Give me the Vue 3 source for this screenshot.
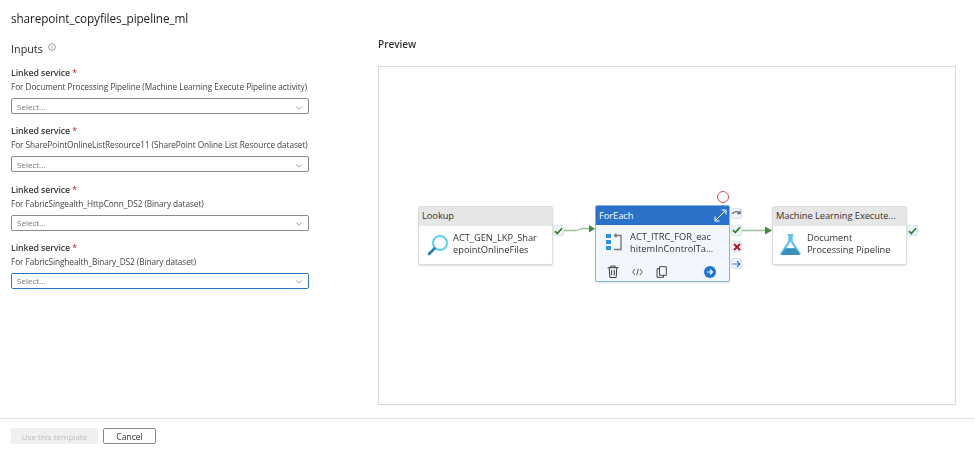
<template>
  <div class="page">
    <h1 class="title">sharepoint_copyfiles_pipeline_ml</h1>

    <div class="main">
      <section class="inputs">
        <h2 class="inputs__head">
          Inputs
          <svg class="info" width="8" height="8" viewBox="0 0 8 8">
            <circle cx="4" cy="4" r="3.4" fill="none" stroke="#777" stroke-width="0.7" />
            <path d="M4 3.5v2.2M4 2.2v.7" stroke="#777" stroke-width="0.7" />
          </svg>
        </h2>
        <div v-for="(f, i) in fields" :key="i" class="field">
          <div class="field__label">Linked service <span class="req">*</span></div>
          <div class="field__desc">{{ f.desc }}</div>
          <div class="select" :class="{ 'select--focus': f.focus }">
            <span>Select...</span>
            <svg width="6" height="4" viewBox="0 0 6 4">
              <path d="M.4.6 3 3.200 5.600.6" fill="none" stroke="#888" stroke-width="0.8" />
            </svg>
          </div>
        </div>
      </section>

      <section class="preview">
        <h2 class="preview__head">Preview</h2>
        <div class="canvas">
          <svg class="edges" width="578" height="339" viewBox="0 0 578 339">
            <path d="M185 164.500H198C202 164.500 201 162.500 205 162.500H212" fill="none" stroke="#9dc29d" stroke-width="1.500" />
            <path d="M211 159v7.500l6-3.750z" fill="#3f8a3f" />
            <path d="M362 164.500H389" fill="none" stroke="#9dc29d" stroke-width="1.500" />
            <path d="M387 160.500v8l7-4z" fill="#3f8a3f" />
          </svg>

          <div class="node node--lookup">
            <div class="node__head">Lookup</div>
            <div class="node__body">
              <svg class="node__icon" width="22" height="22" viewBox="0 0 22 22">
                <circle cx="13" cy="9" r="7" fill="#fff" stroke="#5ed0f2" stroke-width="2" />
                <path d="M7.500 14.500 2 20" stroke="#2a7cb0" stroke-width="2.600" stroke-linecap="round" />
              </svg>
              <div class="node__text">ACT_GEN_LKP_Shar<br />epointOnlineFiles</div>
            </div>
          </div>
          <span class="badge badge--lookup">
            <svg width="9" height="8" viewBox="0 0 9 8"><path d="M1 4.200 3.300 6.500 8 1.300" fill="none" stroke="#2f7d1e" stroke-width="1.700" /></svg>
          </span>

          <div class="node node--foreach">
            <div class="node__head">
              ForEach
              <svg class="expand" width="13" height="13" viewBox="0 0 13 13">
                <path d="M1 12 12 1M7.500 1H12V5.500M1 7.500V12H5.500" fill="none" stroke="#fff" stroke-width="1" />
              </svg>
            </div>
            <div class="node__body">
              <svg class="node__icon" width="16" height="18" viewBox="0 0 16 18">
                <rect x="0" y="1" width="5" height="4" fill="#2f8fe0" />
                <rect x="0" y="7" width="5" height="4" fill="#2f8fe0" />
                <rect x="0" y="13" width="5" height="4" fill="#2f8fe0" />
                <path d="M9 2.500h6v14H8M10.500 .8 8.500 2.500l2 1.700" fill="none" stroke="#777" stroke-width="1.400" />
              </svg>
              <div class="node__text">ACT_ITRC_FOR_eac<br />hitemInControlTa...</div>
            </div>
            <div class="node__tools">
              <svg width="12" height="13" viewBox="0 0 11 12">
                <path d="M.5 2.500h10M3.500 2.500V1h4v1.500M2 2.500l.6 9h5.800l.6-9M4.300 4.500v5M6.700 4.500v5" fill="none" stroke="#333" stroke-width="0.900" />
              </svg>
              <svg width="11" height="8" viewBox="0 0 11 8">
                <path d="M3 1 .7 4 3 7M8 1l2.300 3L8 7M6.300 .8 4.700 7.200" fill="none" stroke="#333" stroke-width="0.800" />
              </svg>
              <svg width="11" height="12" viewBox="0 0 11 12">
                <path d="M3.500 .7h6.800v8.600H3.500zM3.500 2.700H1v8.600h6.500V9.300" fill="none" stroke="#333" stroke-width="0.900" />
              </svg>
              <span class="tools__go">
                <svg width="8" height="8" viewBox="0 0 8 8"><path d="M1 4h5.500M4 1.500 6.500 4 4 6.500" fill="none" stroke="#fff" stroke-width="1.100" /></svg>
              </span>
            </div>
          </div>
          <span class="ring"></span>
          <div class="ports">
            <span class="badge">
              <svg width="9" height="7" viewBox="0 0 9 7"><path d="M.5 4C2.500 1 5.500 1 7.800 3M8 .8V3.500H5.300" fill="none" stroke="#666" stroke-width="1.300" /></svg>
            </span>
            <span class="badge">
              <svg width="9" height="8" viewBox="0 0 9 8"><path d="M1 4.200 3.300 6.500 8 1.300" fill="none" stroke="#2f7d1e" stroke-width="1.700" /></svg>
            </span>
            <span class="badge">
              <svg width="8" height="8" viewBox="0 0 8 8"><path d="M1 1l6 6M7 1 1 7" fill="none" stroke="#b3131b" stroke-width="1.900" /></svg>
            </span>
            <span class="badge">
              <svg width="9" height="8" viewBox="0 0 9 8"><path d="M.5 4h7M5 1.200 7.800 4 5 6.800" fill="none" stroke="#2a75c4" stroke-width="1.200" /></svg>
            </span>
          </div>

          <div class="node node--ml">
            <div class="node__head">Machine Learning Execute...</div>
            <div class="node__body">
              <svg class="node__icon" width="21" height="21" viewBox="0 0 21 21">
                <path d="M7.500 0h6v1.500h-.8v5.500l7.800 12c.6 1-.1 2-1.200 2H1.700C.6 21-.1 20 .5 19l7.800-12V1.500h-.8z" fill="#62c3e8" />
                <path d="M10.500 7.500 14.500 14H6.500z" fill="#fff" />
                <path d="M5 14.500h11l3.500 5.500c.2.500-.1 1-.6 1H2.100c-.5 0-.8-.5-.6-1z" fill="#3a8fbb" />
              </svg>
              <div class="node__text node__text--clip">Document<br />Processing Pipeline</div>
            </div>
          </div>
          <span class="badge badge--ml">
            <svg width="9" height="8" viewBox="0 0 9 8"><path d="M1 4.200 3.300 6.500 8 1.300" fill="none" stroke="#2f7d1e" stroke-width="1.700" /></svg>
          </span>
        </div>
      </section>
    </div>

    <footer class="footer">
      <button class="btn btn--disabled" disabled>Use this template</button>
      <button class="btn">Cancel</button>
    </footer>
  </div>
</template>

<script setup>
const fields = [
  { desc: "For Document Processing Pipeline (Machine Learning Execute Pipeline activity)" },
  { desc: "For SharePointOnlineListResource11 (SharePoint Online List Resource dataset)" },
  { desc: "For FabricSingealth_HttpConn_DS2 (Binary dataset)" },
  { desc: "For FabricSinghealth_Binary_DS2 (Binary dataset)", focus: true },
]
</script>

<style>
body {
  margin: 0;
  background: #fff;
}
</style>

<style scoped>
.page {
  width: 975px;
  height: 453px;
  display: flex;
  flex-direction: column;
  overflow: hidden;
  font-family: "Open Sans", "Noto Sans", sans-serif;
  color: #2b2b2b;
  filter: blur(0.3px);
}

.title {
  margin: 0;
  padding: 10px 0 0 11px;
  font-size: 11.770px;
  line-height: 17px;
  font-weight: 400;
  letter-spacing: -0.1px;
  color: #1f1f1f;
}

.main {
  display: flex;
  flex: 1;
  padding: 0 19px 0 11px;
}

.inputs {
  width: 298px;
  padding-top: 14px;
}

.inputs__head {
  margin: 0 0 11px;
  font-size: 10.800px;
  line-height: 15px;
  font-weight: 400;
  display: flex;
  align-items: flex-start;
  gap: 5px;
}

.info {
  margin-top: 2px;
}

.field {
  height: 58.300px;
}

.field__label {
  font-size: 8.800px;
  line-height: 13px;
  font-weight: 600;
  letter-spacing: -0.1px;
  color: #3a3a3a;
}

.req {
  color: #b3261e;
  font-weight: 400;
}

.field__desc {
  font-size: 8.250px;
  line-height: 13px;
  color: #444;
  letter-spacing: -0.06px;
  margin-bottom: 5px;
  white-space: nowrap;
}

.select {
  height: 16px;
  box-sizing: border-box;
  border: 1px solid #8a8a8a;
  border-radius: 2px;
  display: flex;
  align-items: center;
  justify-content: space-between;
  padding: 0 6px 0 5px;
  font-size: 8px;
  color: #777;
}

.select svg {
  margin-top: 3px;
}

.select--focus {
  border: 1.500px solid #2a7bc8;
}

.preview {
  margin-left: 69px;
  flex: 1;
  padding-top: 10px;
}

.preview__head {
  margin: 0 0 14px;
  font-size: 10px;
  line-height: 15px;
  font-weight: 600;
  color: #333;
}

.canvas {
  position: relative;
  height: 339px;
  box-sizing: border-box;
  border: 1px solid #d9d9d9;
  width: 578px;
}

.edges {
  position: absolute;
  left: -1px;
  top: -1px;
}

.node {
  position: absolute;
  width: 135px;
  box-sizing: border-box;
  background: #fff;
  border: 1px solid #dcdcdc;
  border-radius: 2px;
  box-shadow: 0 1px 2px rgba(0, 0, 0, 0.12);
  overflow: hidden;
}

.node--lookup {
  left: 39px;
  top: 139px;
  height: 59px;
}

.node--ml {
  left: 393px;
  top: 139px;
  height: 59px;
}

.node--foreach {
  left: 216px;
  top: 138px;
  height: 77px;
  background: #f2f7fd;
  border-color: #86b4e4;
}

.node__head {
  height: 19px;
  box-sizing: border-box;
  background: #e6e6e6;
  padding: 0 3px;
  font-size: 9.300px;
  line-height: 18px;
  color: #333;
  white-space: nowrap;
  letter-spacing: -0.05px;
}

.node--foreach .node__head {
  background: #2a72c9;
  color: #fff;
  display: flex;
  justify-content: space-between;
  align-items: center;
  padding-right: 2px;
}

.node__body {
  display: flex;
  align-items: flex-start;
  padding: 6px 0 0 8px;
  height: 32px;
  gap: 4px;
}

.node__text {
  font-size: 9.300px;
  line-height: 12px;
  color: #333;
  white-space: nowrap;
}

.node__text--clip {
  height: 22px;
  overflow: hidden;
}

.node--lookup .node__icon {
  margin-top: 2px;
}

.node--ml .node__body {
  gap: 6px;
  padding-left: 7px;
}

.node--ml .node__icon {
  margin-top: 2px;
}

.node--foreach .node__body {
  padding-left: 10px;
  gap: 8px;
  height: 29px;
}

.node--foreach .node__icon {
  margin-top: 2px;
}

.node__tools {
  display: flex;
  align-items: center;
  gap: 13px;
  padding: 0 13px 0 11px;
  margin-top: 5px;
}

.tools__go {
  margin-left: auto;
  width: 12px;
  height: 12px;
  border-radius: 50%;
  background: #1f74cf;
  display: flex;
  align-items: center;
  justify-content: center;
}

.ring {
  position: absolute;
  left: 338px;
  top: 124px;
  width: 12px;
  height: 12px;
  box-sizing: border-box;
  border: 1px solid #e2484f;
  border-radius: 50%;
}

.ports {
  position: absolute;
  left: 352px;
  top: 141px;
  display: flex;
  flex-direction: column;
  gap: 5.700px;
}

.badge {
  width: 11px;
  height: 11px;
  box-sizing: border-box;
  background: #eef4fc;
  border: 1px solid #d4e3f5;
  border-radius: 2px;
  display: flex;
  align-items: center;
  justify-content: center;
}

.badge--lookup {
  position: absolute;
  left: 174px;
  top: 158px;
}

.badge--ml {
  position: absolute;
  left: 528px;
  top: 158px;
}

.footer {
  border-top: 1px solid #e3e3e3;
  height: 35px;
  box-sizing: border-box;
  padding: 9px 0 0 11px;
  display: flex;
  align-items: flex-start;
  gap: 5px;
}

.btn {
  height: 16px;
  padding: 0;
  width: 53px;
  box-sizing: border-box;
  border: 1px solid #8a8a8a;
  border-radius: 2px;
  background: #fff;
  font-family: inherit;
  font-size: 8.500px;
  line-height: 13px;
  color: #333;
}

.btn--disabled {
  width: 87px;
  font-size: 8px;
  background: #f0f0f0;
  border-color: #f0f0f0;
  color: #bcbcbc;
}
</style>
